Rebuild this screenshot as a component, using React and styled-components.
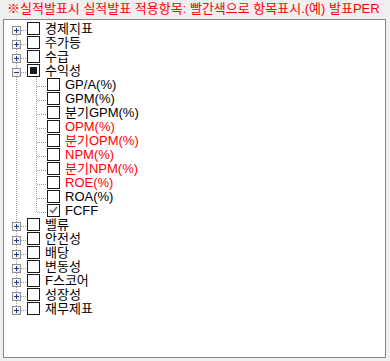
import React from "react";
import styled, { createGlobalStyle, css } from "styled-components";

const GlobalStyle = createGlobalStyle`
  html, body {
    margin: 0;
    padding: 0;
    background: #f0f0f0;
  }
  body {
    font-family: "Liberation Sans", "Noto Sans CJK KR", sans-serif;
    font-size: 13px;
  }
`;

const Page = styled.div`
  width: 390px;
  height: 361px;
  background: #f0f0f0;
  box-sizing: border-box;
  padding-left: 3px;
`;

const Notice = styled.div`
  height: 19px;
  line-height: 18px;
  padding-left: 4px;
  color: #ff0000;
  white-space: nowrap;
`;

const TreeBox = styled.div`
  width: 383px;
  height: 339px;
  box-sizing: border-box;
  border: 1px solid #828790;
  background: #ffffff;
  padding: 1px 0 0 2px;
`;

const Row = styled.div`
  display: flex;
  align-items: flex-start;
  height: 14px;
`;

const dotsV = "repeating-linear-gradient(to bottom, #a0a0a0 0 1px, transparent 1px 2px)";
const dotsH = "repeating-linear-gradient(to right, #a0a0a0 0 1px, transparent 1px 2px)";

// one indentation column: vertical guide ("full" | "top" | "bottom" | "none") and optional branch
const Guide = styled.div`
  flex: 0 0 20px;
  height: 14px;
  padding: 5px 0 0 6px;
  box-sizing: border-box;
  background-repeat: no-repeat;
  ${({ $vert, $branch }) => {
    const imgs = [];
    const pos = [];
    const size = [];
    if ($vert === "full") { imgs.push(dotsV); pos.push("10px 0"); size.push("1px 14px"); }
    if ($vert === "top") { imgs.push(dotsV); pos.push("10px 0"); size.push("1px 10px"); }
    if ($vert === "bottom") { imgs.push(dotsV); pos.push("10px 10px"); size.push("1px 4px"); }
    if ($branch) { imgs.push(dotsH); pos.push("11px 9px"); size.push("9px 1px"); }
    if (!imgs.length) return "";
    return css`
      background-image: ${imgs.join(", ")};
      background-position: ${pos.join(", ")};
      background-size: ${size.join(", ")};
    `;
  }}
`;

const Expander = styled.span`
  position: relative;
  display: block;
  width: 9px;
  height: 9px;
  box-sizing: border-box;
  border: 1px solid #919191;
  background: linear-gradient(135deg, #ffffff 0%, #e4e4e4 100%);
  &::before, &::after {
    content: "";
    position: absolute;
    background: #1f3a8a;
  }
  &::before {
    left: 1px;
    top: 3px;
    width: 5px;
    height: 1px;
  }
  ${({ $open }) =>
    !$open &&
    css`
      &::after {
        left: 3px;
        top: 1px;
        width: 1px;
        height: 5px;
      }
    `}
`;

const Check = styled.span`
  flex: 0 0 13px;
  width: 13px;
  height: 13px;
  box-sizing: border-box;
  border: 1px solid #1a1a1a;
  background: #ffffff;
  margin: 1px 0 0 1px;
  display: flex;
  align-items: center;
  justify-content: center;
  ${({ $state }) =>
    $state === "partial" &&
    css`
      &::before {
        content: "";
        width: 7px;
        height: 7px;
        background: #1a1a1a;
      }
    `}
`;

const Label = styled.span`
  margin: 1px 0 0 5px;
  white-space: nowrap;
  line-height: 14px;
  color: ${({ $red }) => ($red ? "#ff0000" : "#000000")};
`;

const Tick = () => (
  <svg width="11" height="11" viewBox="0 0 11 11">
    <path d="M2 5 L4.5 7.5 L9 2" fill="none" stroke="#6b6b6b" strokeWidth="1.6" />
  </svg>
);

const roots = [
  { label: "경제지표" },
  { label: "주가등" },
  { label: "수급" },
  {
    label: "수익성",
    open: true,
    state: "partial",
    children: [
      { label: "GP/A(%)" },
      { label: "GPM(%)" },
      { label: "분기GPM(%)" },
      { label: "OPM(%)", red: true },
      { label: "분기OPM(%)", red: true },
      { label: "NPM(%)", red: true },
      { label: "분기NPM(%)", red: true },
      { label: "ROE(%)", red: true },
      { label: "ROA(%)" },
      { label: "FCFF", state: "checked" },
    ],
  },
  { label: "벨류" },
  { label: "안전성" },
  { label: "배당" },
  { label: "변동성" },
  { label: "F스코어" },
  { label: "성장성" },
  { label: "재무제표" },
];

function CheckBox({ state }) {
  return <Check $state={state}>{state === "checked" && <Tick />}</Check>;
}

export default function App() {
  return (
    <Page>
      <GlobalStyle />
      <Notice>※실적발표시 실적발표 적용항목: 빨간색으로 항목표시.(예) 발표PER</Notice>
      <TreeBox>
        {roots.map((node, i) => {
          const first = i === 0;
          const last = i === roots.length - 1;
          const vert = first ? "bottom" : last ? "top" : "full";
          return (
            <React.Fragment key={node.label}>
              <Row>
                <Guide $vert={vert} $branch>
                  <Expander $open={node.open} />
                </Guide>
                <CheckBox state={node.state} />
                <Label $red={node.red}>{node.label}</Label>
              </Row>
              {node.open &&
                node.children.map((child, j) => (
                  <Row key={child.label}>
                    <Guide $vert={last ? "none" : "full"} />
                    <Guide $vert={j === node.children.length - 1 ? "top" : "full"} $branch />
                    <CheckBox state={child.state} />
                    <Label $red={child.red}>{child.label}</Label>
                  </Row>
                ))}
            </React.Fragment>
          );
        })}
      </TreeBox>
    </Page>
  );
}
